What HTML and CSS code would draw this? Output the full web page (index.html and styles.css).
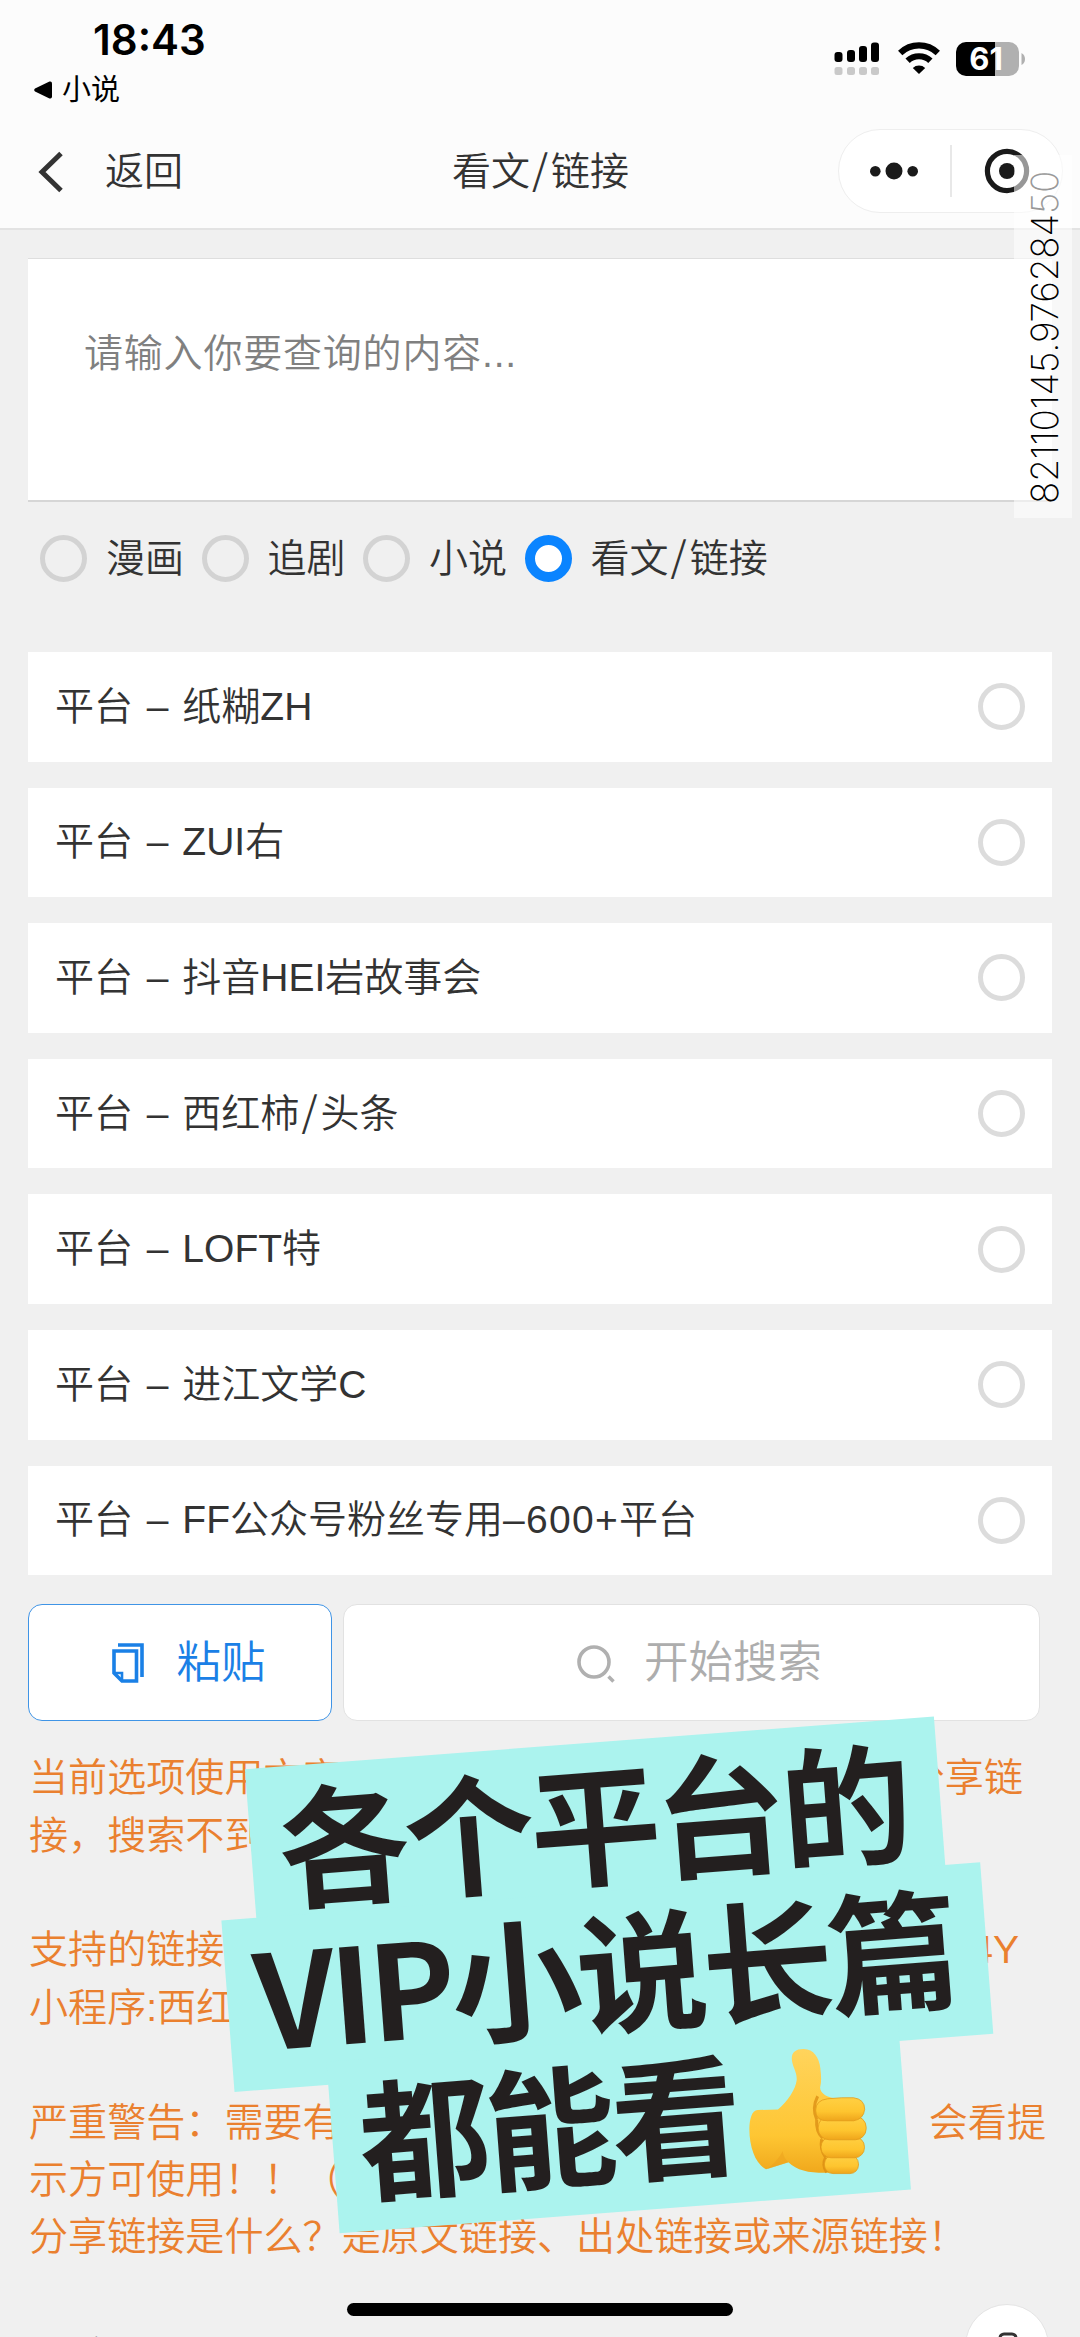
FILE: index.html
```html
<!DOCTYPE html>
<html lang="zh-CN">
<head>
<meta charset="utf-8">
<title>看文/链接</title>
<link rel="stylesheet" href="styles.css">
</head>
<body>
<div class="screen">
  <header class="header">
    <div class="status">
      <div class="status-left">
        <div class="time">18:43</div>
        <div class="return-app"><svg width="18" height="18" viewBox="0 0 18 18"><path d="M1 7.6 15.5.6Q18 0 18 2.5v13q0 2.5-2.5 1.9L1 10.4Q-.6 9 1 7.6z"/></svg><span>小说</span></div>
      </div>
      <svg class="status-icons" width="192" height="36" viewBox="0 0 192 36">
        <rect x="1.5" y="11" width="8" height="10" rx="3"/><rect x="14" y="9" width="8" height="12" rx="3"/><rect x="26" y="5" width="8" height="16" rx="3"/><rect x="38" y="1.500" width="8" height="19.500" rx="3"/>
        <g fill="#c9c9c9"><rect x="1.500" y="26" width="8" height="8" rx="2.500"/><rect x="14" y="26" width="8" height="8" rx="2.500"/><rect x="26" y="26" width="8" height="8" rx="2.500"/><rect x="38" y="26" width="8" height="8" rx="2.500"/></g>
        <g fill="none" stroke="#000" stroke-width="6.200"><path d="M67.200 11.900a27 27 0 0 1 37.600 0"/><path d="M74.600 19.800a16.500 16.500 0 0 1 22.800 0"/></g>
        <path d="M79.800 27a9 9 0 0 1 12.400 0L86 33z"/>
        <path d="M133 1h29v34h-29a10 10 0 0 1-10-10V11a10 10 0 0 1 10-10z"/>
        <path d="M162 1h14a10 10 0 0 1 10 10v14a10 10 0 0 1-10 10h-14z" fill="#b0b0b0"/>
        <path d="M188.500 12q3.500 2 3.500 6t-3.500 6z" fill="#b0b0b0"/>
        <text class="battery-level" x="153" y="29" text-anchor="middle">61</text>
      </svg>
    </div>
    <nav class="nav">
      <div class="back"><svg width="26" height="42" viewBox="0 0 26 42"><path d="M23 2.500 4 21l19 18.500" fill="none" stroke="#333" stroke-width="5"/></svg><span>返回</span></div>
      <h1 class="title">看文<span class="slash">/</span>链接</h1>
      <div class="capsule">
        <svg width="48" height="20" viewBox="0 0 48 20"><circle cx="5.300" cy="10.300" r="5.300"/><circle cx="24" cy="10" r="8.500"/><circle cx="42.700" cy="10.300" r="5.300"/></svg>
        <span class="capsule-line"></span>
        <svg width="46" height="46" viewBox="0 0 46 46"><circle cx="23" cy="23" r="19.600" fill="none" stroke="#1a1a1a" stroke-width="5.200"/><circle cx="23" cy="23" r="8"/></svg>
      </div>
    </nav>
  </header>

  <main class="content">
    <div class="query">请输入你要查询的内容...</div>
    <div class="types">
      <div class="type"><i class="radio"></i><span>漫画</span></div>
      <div class="type"><i class="radio"></i><span>追剧</span></div>
      <div class="type"><i class="radio"></i><span>小说</span></div>
      <div class="type"><i class="radio radio-on"></i><span>看文<span class="slash">/</span>链接</span></div>
    </div>
    <ul class="platforms">
      <li><span>平台 – 纸糊ZH</span><i class="radio"></i></li>
      <li><span>平台 – ZUI右</span><i class="radio"></i></li>
      <li><span>平台 – 抖音HEI岩故事会</span><i class="radio"></i></li>
      <li><span>平台 – 西红柿<span class="slash">/</span>头条</span><i class="radio"></i></li>
      <li><span>平台 – LOFT特</span><i class="radio"></i></li>
      <li><span>平台 – 进江文学C</span><i class="radio"></i></li>
      <li><span>平台 – FF公众号粉丝专用<span class="count">–600+</span>平台</span><i class="radio"></i></li>
    </ul>
    <div class="actions">
      <div class="button paste"><svg width="32" height="40" viewBox="0 0 32 40"><g fill="none" stroke="#1a80e6" stroke-width="3.600"><path d="M6 2h24v32"/><path d="M2 8h22.500v30H10L2 30z"/><path d="M2 30h8v8" stroke-width="2.600"/></g></svg><span>粘贴</span></div>
      <div class="button search"><svg width="40" height="40" viewBox="0 0 40 40"><g fill="none" stroke="#b0b0b0" stroke-width="3.600"><circle cx="18" cy="19" r="15"/><path d="m32.500 33.500 5 5"/></g></svg><span>开始搜索</span></div>
    </div>
    <div class="notice">
      <p class="split"><span>当前选项使用文字</span><span class="end-a">分享链</span></p>
      <p>接，搜索不到</p>
      <p class="gap split"><span>支持的链接</span><span class="end-b">4Y</span></p>
      <p>小程序:西红</p>
      <p class="gap split"><span>严重警告：需要有</span><span class="end-c">会看提</span></p>
      <p>示方可使用！！（</p>
      <p>分享链接是什么？是原文链接、出处链接或来源链接！</p>
    </div>
    <div class="next-title">文教主</div>
  </main>

  <div class="float-button"><svg width="26" height="40" viewBox="0 0 26 40"><rect x="5" y="2" width="16" height="30" rx="4" fill="none" stroke="#333" stroke-width="3"/></svg></div>
  <div class="home-bar"></div>
  <div class="serial">82110145.976284<span>50</span></div>

  <div class="sticker">
    <div class="band">各个平台的</div>
    <div class="band">VIP小说长篇</div>
    <div class="band band-last">都能看<svg class="thumb" width="136" height="136" viewBox="-68 -68 136 136">
      <defs>
        <linearGradient id="skin" x1="0" y1="0" x2="0" y2="1"><stop offset="0" stop-color="#ffd45c"/><stop offset=".7" stop-color="#fec633"/><stop offset="1" stop-color="#f0a81c"/></linearGradient>
        <linearGradient id="finger" x1="0" y1="0" x2="0" y2="1"><stop offset="0" stop-color="#ffd043"/><stop offset=".6" stop-color="#fec52f"/><stop offset="1" stop-color="#efa51b"/></linearGradient>
      </defs>
      <g transform="rotate(4.380)">
        <path fill="url(#skin)" d="M-3.800-62.300C-13-62.500-17-58-15.600-50-14.500-43-10.500-39-11-31-12-22-20-10-29.700-1.700L-50-1.300C-56-1-58 8-58.300 17-58.500 36-52 53-41.700 58L-19.300 51C-10 60 3 62 22 61.500L30-12.500C20-13 12-18 12.500-24 14-30 13.500-36 12.700-43 11.500-54 6-62-3.800-62.300z"/>
        <path d="M-41 58-19 51Q-24 47-25 40-30 50-41 58z" fill="#eca31d" opacity=".55"/>
        <path d="M10-15Q4-3 9 8M9 8Q8 20 15 27M14 28Q12 38 18 46M18 46Q14 54 19 61" fill="none" stroke="#d98b12" stroke-width="3" opacity=".75"/>
        <g fill="url(#finger)" stroke="#e39a19" stroke-width=".8">
          <rect x="16.800" y="44" width="34" height="18.300" rx="8.500"/>
          <rect x="13.400" y="25.500" width="43.400" height="21" rx="10"/>
          <rect x="10.600" y="5" width="47.900" height="23.500" rx="11"/>
          <path d="M20-12.500Q34-14 46-13.500 57-12 57-2 56 8 46 9.500H20Q8 10 8-1 8-11 20-12.500z"/>
        </g>
      </g>
    </svg></div>
  </div>
</div>
</body>
</html>
```
FILE: styles.css
```css
* { box-sizing: border-box; margin: 0; padding: 0; }

body {
  font-family: "Liberation Sans", "Noto Sans CJK SC", sans-serif;
  font-size: 39px;
  line-height: 52px;
  font-weight: 350;
  color: #333;
  background: #f0f0f0;
}

.screen { position: relative; width: 1080px; height: 2337px; overflow: hidden; }
.slash { margin: 0 3px 0 2px; font-family: "Noto Sans CJK SC", sans-serif; font-size: 41px; line-height: 0; }

.header { height: 230px; background: #fcfcfc; border-bottom: 2px solid #e3e3e3; }
.status { display: flex; justify-content: space-between; height: 114px; padding: 15px 55px 0 34px; color: #000; }
.time { padding-left: 59px; font: 600 42px/50px Inter, sans-serif; letter-spacing: 0; }
.return-app { display: flex; align-items: center; gap: 10px; margin-top: 7px; font-size: 29px; line-height: 36px; font-weight: 400; }
.status-icons { margin-top: 26px; }
.battery-level { font: 700 31px Inter, sans-serif; fill: #fff; }

.nav { display: grid; grid-template-columns: 1fr auto 1fr; align-items: center; height: 114px; padding: 0 17px 0 38px; }
.back { display: flex; align-items: center; gap: 41px; padding-top: 2px; }
.title { font-size: 39px; font-weight: inherit; padding: 2px 0 0; transform: translateX(-10px); }
.capsule { justify-self: end; display: flex; align-items: center; width: 225px; height: 84px; padding: 0 32px 0 31px; border: 1.5px solid #eeeeee; border-radius: 42px; background: #fff; fill: #1a1a1a; justify-content: space-between; }
.capsule-line { width: 1.5px; height: 52px; background: #e8e8e8; }

.content { padding: 28px 28px 0; }
.query { height: 244px; padding: 62px 56px; background: #fff; border-top: 1px solid #dedede; border-bottom: 2px solid #d6d6d6; font-size: 39px; letter-spacing: .8px; line-height: 66px; color: #808080; }
.types { display: flex; gap: 17.5px; height: 150px; padding: 33px 12px 0; }
.type { display: flex; align-items: center; gap: 19px; height: 47px; }
.radio { display: block; flex: none; width: 47px; height: 47px; border: 5px solid #d3d3d3; border-radius: 50%; }
.radio-on { border: 10px solid #0a84ff; background: #fff; }

.platforms { display: flex; flex-direction: column; gap: 26px; list-style: none; }
.platforms li { display: flex; align-items: center; justify-content: space-between; height: 109.6px; padding: 0 27px 0 27px; background: #fff; word-spacing: 3px; }
.platforms .radio { border-color: #dcdcdc; }
.count { letter-spacing: 1.3px; }

.actions { display: flex; gap: 11px; margin-top: 29px; padding-right: 12px; }
.button { display: flex; align-items: center; justify-content: center; height: 117px; border-radius: 14px; background: #fff; font-size: 44.500px; }
.paste { width: 304px; padding-left: 18px; border: 1.5px solid #3f94e6; gap: 32px; color: #1a80e6; }
.search { flex: 1; padding-left: 15px; border: 1.5px solid #e2e2e2; gap: 28px; color: #adadad; }

.notice { margin-top: 28px; padding-left: 1px; color: #ea802f; font-size: 39.100px; line-height: 57.400px; white-space: nowrap; }
.notice .gap { margin-top: 57.400px; }
.split { display: flex; justify-content: space-between; }
.end-a { padding-right: 29px; }
.end-b { padding-right: 33px; }
.end-c { padding-right: 6px; }
.next-title { margin: 68px 0 0 45px; font-size: 44px; line-height: 52px; font-weight: 700; }

.float-button { position: absolute; left: 965px; top: 2304px; width: 84px; height: 84px; padding: 27px 29px; border-radius: 50%; border: 1.5px solid #e4e4e4; background: #fff; }
.home-bar { position: absolute; left: 347px; top: 2303px; width: 386px; height: 13px; border-radius: 7px; background: #000; }

.serial { position: absolute; left: 1014px; top: 155px; width: 58px; height: 363px; padding-top: 14px; background: rgba(255, 255, 255, .55); writing-mode: vertical-rl; transform: rotate(180deg); font: 200 37px/62px Inter, sans-serif; letter-spacing: -.2px; color: #000; white-space: nowrap; }
.serial span { color: #999; }

.sticker { position: absolute; left: 209.400px; top: 1771.800px; width: 763px; display: flex; flex-direction: column; align-items: center; transform: rotate(-4.380deg); transform-origin: 0 0; color: #231f1f; font: 700 131px/152px "Noto Sans CJK SC", sans-serif; letter-spacing: -5px; }
.band { display: flex; height: 172px; margin-bottom: -23px; padding: 0 33px 20px 27px; background: #abf3ee; white-space: nowrap; }
.band-last { padding-right: 29px; }
.thumb { margin: 18px 0 0 3px; }
```
